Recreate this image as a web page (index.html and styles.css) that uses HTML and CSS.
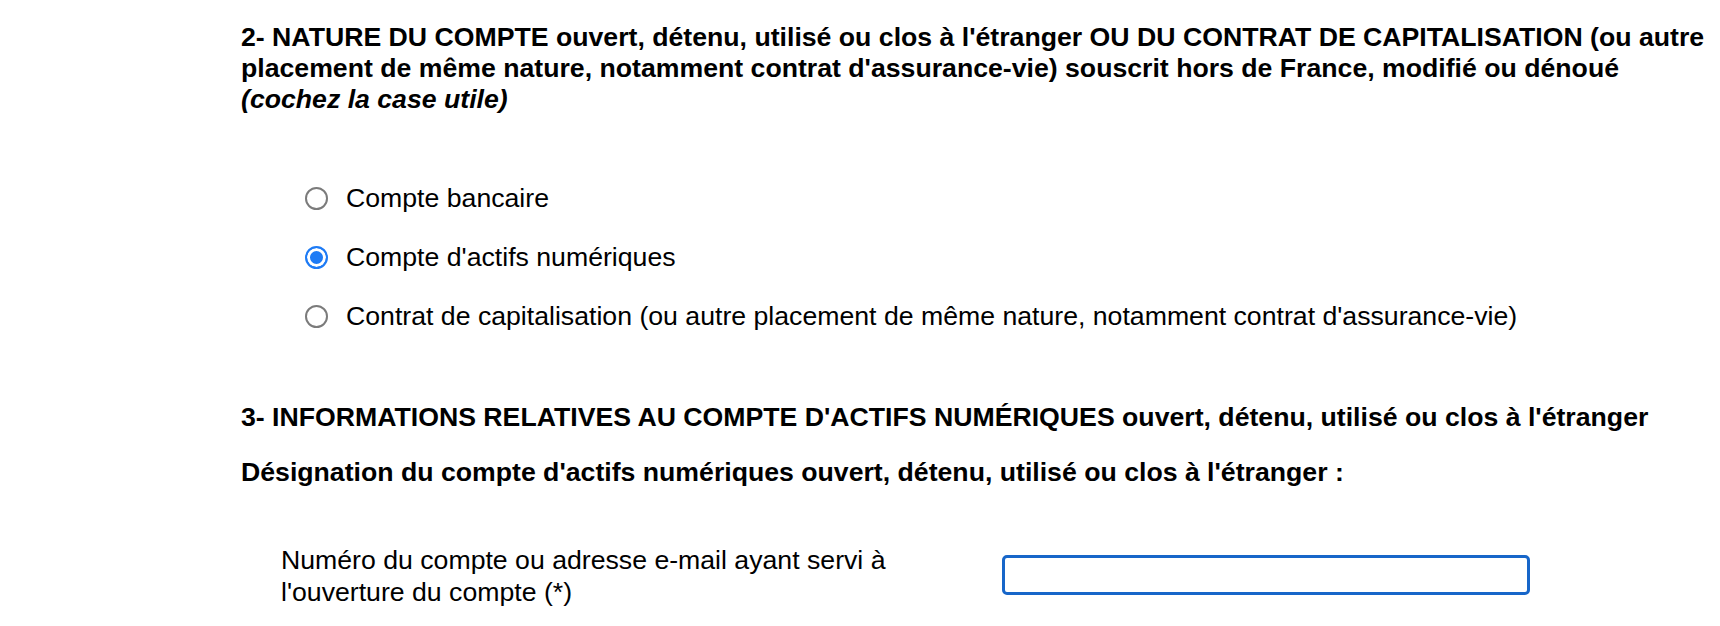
FILE: index.html
```html
<!DOCTYPE html>
<html lang="fr">
<head>
    <meta charset="UTF-8">
    <title>Déclaration de compte à l'étranger</title>
    <link rel="stylesheet" href="styles.css">
</head>
<body>
    <div class="page">
        <p class="sec-title">2- NATURE DU COMPTE ouvert, détenu, utilisé ou clos à l'étranger OU DU CONTRAT DE CAPITALISATION (ou autre placement de même nature, notamment contrat d'assurance-vie) souscrit hors de France, modifié ou dénoué<br><em>(cochez la case utile)</em></p>

        <div class="choices">
            <label class="choice">
                <input type="radio" name="nature" value="bancaire">
                <span>Compte bancaire</span>
            </label>
            <label class="choice">
                <input type="radio" name="nature" value="actifs" checked>
                <span>Compte d'actifs numériques</span>
            </label>
            <label class="choice">
                <input type="radio" name="nature" value="contrat">
                <span>Contrat de capitalisation (ou autre placement de même nature, notamment contrat d'assurance-vie)</span>
            </label>
        </div>

        <p class="sec-title sec-3">3- INFORMATIONS RELATIVES AU COMPTE D'ACTIFS NUMÉRIQUES ouvert, détenu, utilisé ou clos à l'étranger</p>
        <p class="sub-title">Désignation du compte d'actifs numériques ouvert, détenu, utilisé ou clos à l'étranger :</p>

        <div class="field">
            <label for="numero" class="field-label">Numéro du compte ou adresse e-mail ayant servi à l'ouverture du compte (*)</label>
            <input type="text" id="numero" name="numero" class="field-input">
        </div>
    </div>
</body>
</html>
```

FILE: styles.css
```css
body {
    margin: 0;
    padding: 0;
    font-family: "Liberation Sans", Arial, sans-serif;
    font-size: 20pt;
    color: #000;
    background: #fff;
}

.page {
    padding: 22px 0 0 241px;
}

.sec-title {
    margin: 0;
    line-height: 31px;
    font-weight: bold;
}

.choices {
    margin-top: 54px;
    padding-left: 64px;
}

.choice {
    display: flex;
    align-items: center;
    height: 59px;
}

/* radio drawn by hand so size and ring match */
.choice input {
    appearance: none;
    -webkit-appearance: none;
    flex: none;
    width: 23px;
    height: 23px;
    margin: 0 18px 0 0;
    border: 2px solid #7b7b7b;
    border-radius: 50%;
    background: #fff;
    box-sizing: border-box;
}

.choice input:checked {
    border: 2.5px solid #1e7bf5;
    background: #1e7bf5;
    box-shadow: inset 0 0 0 3px #fff;
}

.sec-3 {
    margin-top: 56px;
}

.sub-title {
    margin: 24px 0 0;
    line-height: 31px;
    font-weight: bold;
}

.field {
    display: flex;
    align-items: flex-start;
    margin-top: 56px;
    padding-left: 40px;
}

.field-label {
    width: 640px;
    line-height: 32px;
}

.field-input {
    width: 528px;
    height: 40px;
    margin: 11px 0 0 81px;
    box-sizing: border-box;
    border: 3px solid #1766c9;
    border-radius: 5px;
    outline: none;
}
```
